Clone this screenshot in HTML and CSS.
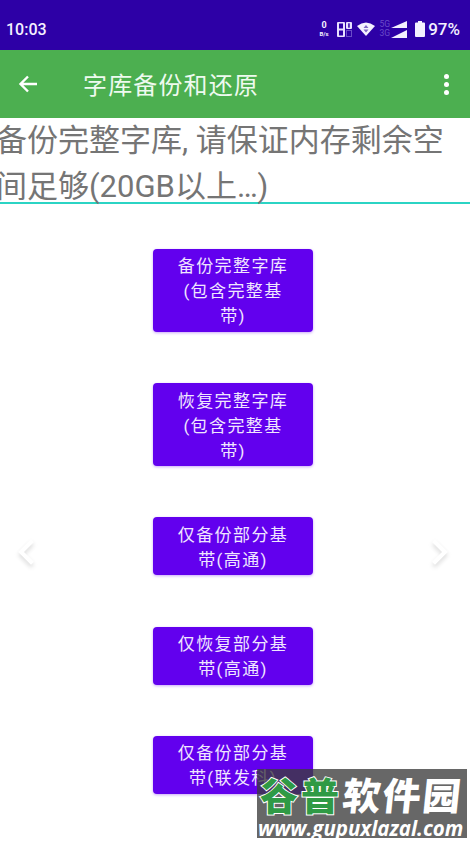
FILE: index.html
```html
<!DOCTYPE html>
<html lang="zh-CN">
<head>
  <meta charset="UTF-8" />
  <meta name="viewport" content="width=device-width, initial-scale=1" />
  <title>字库备份和还原</title>
  <link rel="stylesheet" href="styles.css">
</head>
<body>

  <div class="status-bar">
    <span class="clock">10:03</span>
    <div class="status-icons">
      <div class="net-speed"><span>0</span><span class="net-unit">B/s</span></div>
      <svg class="sim" width="15" height="15" viewBox="0 0 15 15">
        <rect x="0" y="0" width="8" height="15" rx="1" fill="#e8e0ff"/>
        <rect x="2" y="1.5" width="4" height="5" fill="#2d00a6"/>
        <rect x="2" y="8.5" width="4" height="5" fill="#2d00a6"/>
        <rect x="9" y="0" width="6" height="7" rx="1" fill="#e8e0ff"/>
        <rect x="11.2" y="1.3" width="1.5" height="4.4" fill="#2d00a6"/>
        <rect x="9.5" y="8.5" width="5" height="6" fill="none" stroke="#6a4cc8"/>
      </svg>
      <svg class="wifi" width="18" height="14" viewBox="0 0 18 14">
        <path d="M0 4 Q9 -3 18 4 L9 14 Z" fill="#f4f0ff"/>
        <path d="M9 3 L11.5 6 H6.5 Z M6.5 7.5 H11.5 L9 10.5 Z" fill="#7d66c4"/>
      </svg>
      <div class="net-type"><span>5G</span><span>3G</span></div>
      <svg class="signal" width="16" height="17" viewBox="0 0 16 17">
        <path d="M16 0 V7 H0 Z M16 9 V17 H0 Z" fill="#f4f0ff"/>
      </svg>
      <svg class="battery" width="10" height="16" viewBox="0 0 10 16">
        <path d="M3 0 H7 V1.5 H9 Q10 1.5 10 2.5 V15 Q10 16 9 16 H1 Q0 16 0 15 V2.5 Q0 1.5 1 1.5 H3 Z" fill="#f4f0ff"/>
      </svg>
      <span class="battery-level">97%</span>
    </div>
  </div>

  <header class="app-bar">
    <svg class="back" width="24" height="24" viewBox="0 0 24 24">
      <path d="M21 12 H5 M12 4.5 L4.5 12 L12 19.5" fill="none" stroke="#fff" stroke-width="2.4"/>
    </svg>
    <h1>字库备份和还原</h1>
    <div class="more"><i></i><i></i><i></i></div>
  </header>

  <main>
    <div class="notice">备份完整字库, 请保证内存剩余空间足够(20GB以上…)</div>

    <div class="actions">
      <button class="tall">备份完整字库<br>(包含完整基<br>带)</button>
      <button class="tall">恢复完整字库<br>(包含完整基<br>带)</button>
      <button>仅备份部分基<br>带(高通)</button>
      <button>仅恢复部分基<br>带(高通)</button>
      <button>仅备份部分基<br>带(联发科)</button>
    </div>

    <div class="pager pager-prev"></div>
    <div class="pager pager-next"></div>
  </main>

  <!-- Marca de agua -->
  <div class="watermark">
    <div class="wm-name"><span class="wm-green">谷普</span><span class="wm-white">软件园</span></div>
    <div class="wm-url">www.gupuxlazal.com</div>
  </div>

</body>
</html>
```

FILE: styles.css
```css
* {
  box-sizing: border-box;
  margin: 0; padding: 0;
}

html, body {
  height: 100%;
  overflow: hidden;
}

body {
  display: flex;
  flex-direction: column;
  background: #fff;
  font-family: Roboto, "Noto Sans CJK SC", sans-serif;
  position: relative;
}

/* Status bar */
.status-bar {
  height: 50px;
  flex-shrink: 0;
  background: #2d00a6;
  color: #f4f0ff;
  display: flex;
  align-items: center;
  justify-content: space-between;
  padding: 8px 10px 0 6px;
}

.clock {
  font-size: 16px;
  font-weight: 500;
}

.status-icons {
  display: flex;
  align-items: center;
}

.net-speed {
  display: flex;
  flex-direction: column;
  align-items: center;
  font-size: 9px;
  font-weight: 700;
  line-height: 9px;
  margin-right: 8px;
}

.net-unit {
  font-size: 6px;
  line-height: 7px;
}

.sim {
  margin-right: 5px;
}

.wifi {
  margin-right: 5px;
}

.net-type {
  display: flex;
  flex-direction: column;
  font-size: 8.5px;
  line-height: 9px;
  color: #6a4cc8;
  margin-right: 1px;
}

.signal {
  margin-right: 8px;
}

.battery {
  margin-right: 3px;
}

.battery-level {
  font-size: 17px;
  font-weight: 500;
}

/* App bar */
.app-bar {
  height: 68px;
  flex-shrink: 0;
  background: #4caf50;
  color: #fff;
  display: flex;
  align-items: center;
  padding: 0 16px;
  position: relative;
}

.back {
  flex-shrink: 0;
}

.app-bar h1 {
  flex-grow: 1;
  margin-left: 43px;
  margin-top: -2px;
  font-size: 24px;
  font-weight: 400;
  color: #eefaef;
  letter-spacing: 1.15px;
}

.more {
  display: flex;
  flex-direction: column;
  gap: 3px;
  margin-right: 5px;
}

.more i {
  width: 5px;
  height: 5px;
  border-radius: 50%;
  background: #fff;
}

/* Contenido */
main {
  flex-grow: 1;
  position: relative;
  overflow: hidden;
}

.notice {
  margin-left: -4px;
  height: 86px;
  width: 474px;
  padding-right: 20px;
  font-size: 31px;
  line-height: 46px;
  color: #757575;
  border-bottom: 2px solid #2bd4c4;
}

.actions {
  display: flex;
  flex-direction: column;
  align-items: center;
  gap: 51.3px;
  padding: 44.8px 4px 0 0;
}

.actions button {
  width: 160px;
  height: 58px;
  flex-shrink: 0;
  padding: 3px 0 0;
  border: none;
  border-radius: 4px;
  background: #6200ee;
  color: #f0e6ff;
  font-family: inherit;
  font-size: 17px;
  line-height: 25px;
  letter-spacing: 1.4px;
  box-shadow: 0 1px 3px rgba(98,0,238,0.35);
}

.actions button.tall {
  height: 83px;
}

/* Flechas */
.pager {
  position: absolute;
  top: 425px;
  width: 18px;
  height: 18px;
  border-left: 4px solid #fff;
  border-bottom: 4px solid #fff;
}

.pager-prev {
  left: 22px;
  transform: rotate(45deg);
  filter: drop-shadow(2px 2px 2px rgba(0,0,0,0.15));
}

.pager-next {
  right: 26px;
  transform: rotate(225deg);
  filter: drop-shadow(-2px -2px 2px rgba(0,0,0,0.15));
}

/* Marca de agua */
.watermark {
  position: absolute;
  left: 257px;
  top: 769px;
  width: 210px;
  height: 69px;
  background: rgba(60,60,60,0.78);
  color: #fff;
}

.wm-name {
  font-family: "Noto Sans CJK SC", sans-serif;
  font-size: 38px;
  font-weight: 900;
  line-height: 50px;
  height: 50px;
  padding-left: 3px;
  white-space: nowrap;
}

.wm-green {
  color: #2f9a45;
  -webkit-text-stroke: 2px #fff;
  paint-order: stroke fill;
  letter-spacing: 3px;
  margin-right: 1px;
}

.wm-white {
  display: inline-block;
  letter-spacing: 2px;
  transform: skewX(-6deg);
}

.wm-url {
  font-family: "Open Sans", sans-serif;
  font-size: 20.5px;
  font-weight: 700;
  font-style: italic;
  line-height: 18px;
  padding-left: 1px;
  white-space: nowrap;
}
```
